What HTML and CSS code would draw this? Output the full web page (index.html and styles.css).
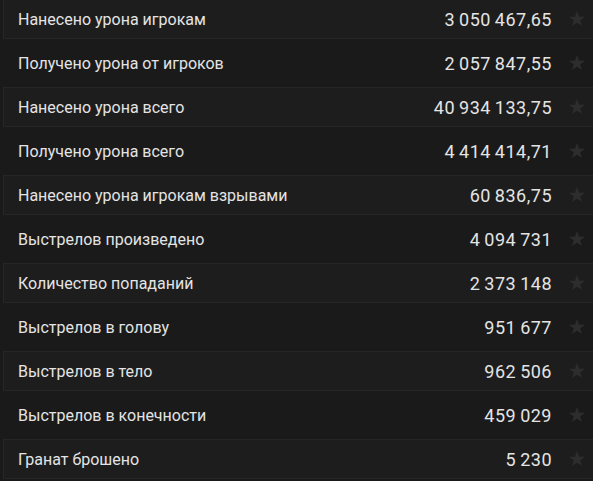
FILE: index.html
```html
<!DOCTYPE html>
<html lang="ru">
<head>
    <meta charset="UTF-8">
    <title>Статистика</title>
    <link rel="stylesheet" href="styles.css">
</head>
<body>
    <ul class="stats">
        <li class="stat-row"><div class="stat-box"><span class="stat-name">Нанесено урона игрокам</span><span class="stat-value">3 050 467,65</span><span class="star">★</span></div></li>
        <li class="stat-row"><div class="stat-box"><span class="stat-name">Получено урона от игроков</span><span class="stat-value">2 057 847,55</span><span class="star">★</span></div></li>
        <li class="stat-row"><div class="stat-box"><span class="stat-name">Нанесено урона всего</span><span class="stat-value">40 934 133,75</span><span class="star">★</span></div></li>
        <li class="stat-row"><div class="stat-box"><span class="stat-name">Получено урона всего</span><span class="stat-value">4 414 414,71</span><span class="star">★</span></div></li>
        <li class="stat-row"><div class="stat-box"><span class="stat-name">Нанесено урона игрокам взрывами</span><span class="stat-value">60 836,75</span><span class="star">★</span></div></li>
        <li class="stat-row"><div class="stat-box"><span class="stat-name">Выстрелов произведено</span><span class="stat-value">4 094 731</span><span class="star">★</span></div></li>
        <li class="stat-row"><div class="stat-box"><span class="stat-name">Количество попаданий</span><span class="stat-value">2 373 148</span><span class="star">★</span></div></li>
        <li class="stat-row"><div class="stat-box"><span class="stat-name">Выстрелов в голову</span><span class="stat-value">951 677</span><span class="star">★</span></div></li>
        <li class="stat-row"><div class="stat-box"><span class="stat-name">Выстрелов в тело</span><span class="stat-value">962 506</span><span class="star">★</span></div></li>
        <li class="stat-row"><div class="stat-box"><span class="stat-name">Выстрелов в конечности</span><span class="stat-value">459 029</span><span class="star">★</span></div></li>
        <li class="stat-row"><div class="stat-box"><span class="stat-name">Гранат брошено</span><span class="stat-value">5 230</span><span class="star">★</span></div></li>
    </ul>
</body>
</html>
```

FILE: styles.css
```css
* {
    margin: 0;
    padding: 0;
    box-sizing: border-box;
}

body {
    background-color: #1a1a1a;
    color: #e4e4e4;
    font-family: 'Roboto', sans-serif;
    overflow: hidden;
}

.stats {
    list-style: none;
    margin-top: -3px;
    margin-left: 3px;
    width: 600px;
}

.stat-row {
    height: 44px;
    padding: 2px 0;
}

.stat-box {
    height: 40px;
    display: flex;
    align-items: center;
    padding-left: 14px;
    border: 1px solid transparent;
}

.stat-row:nth-child(odd) .stat-box {
    background-color: #1d1d1d;
    border-color: #262626;
}

.stat-name {
    flex: 1;
    font-size: 16px;
}

.stat-value {
    font-size: 18px;
    letter-spacing: 0.5px;
    word-spacing: -1px;
}

.star {
    width: 50px;
    text-align: center;
    color: #2d2d2d;
    font-size: 21px;
    font-family: 'DejaVu Sans', sans-serif;
}
```
